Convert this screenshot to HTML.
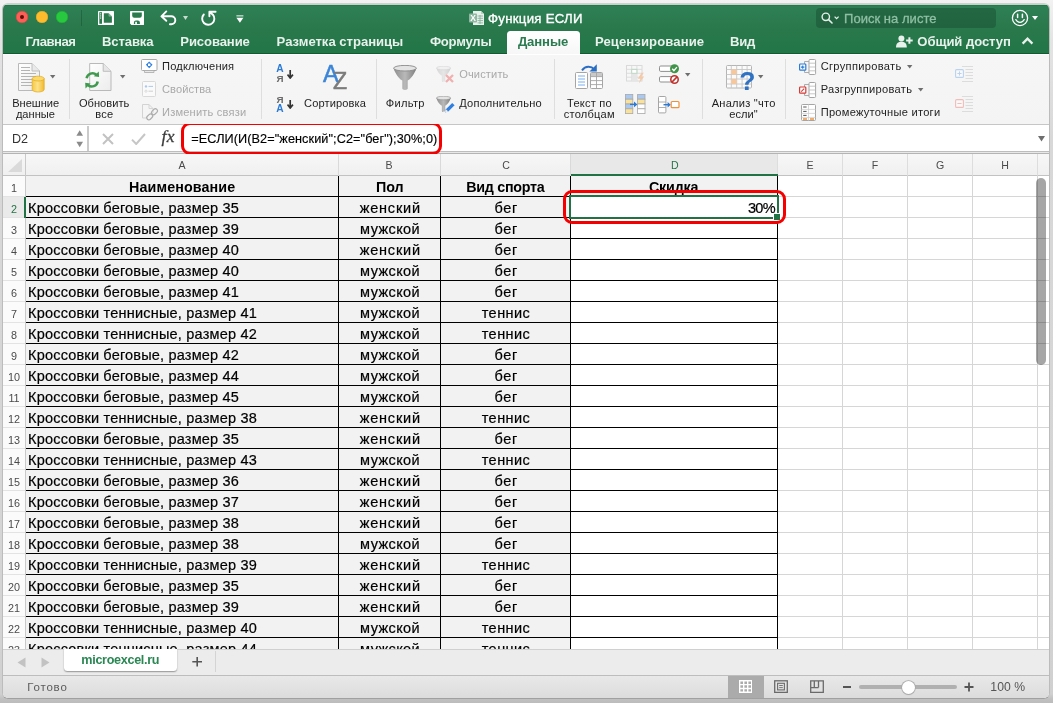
<!DOCTYPE html>
<html lang="ru"><head><meta charset="utf-8"><title>Функция ЕСЛИ</title>
<style>
html,body{margin:0;padding:0}
html{width:1053px;height:703px;overflow:hidden}
body{width:1053px;height:703px;overflow:hidden;position:relative;background:linear-gradient(to bottom,#f2f2f2 0,#e4e4e4 40px,#d8d8d8 140px,#d4d4d4 600px,#d0d0d0 694px,#c0c0c0 699px,#bcbcbc 703px);font-family:"Liberation Sans","DejaVu Sans",sans-serif}
.b{position:absolute;display:block}
.t{position:absolute;white-space:pre;display:block}
#shadow{position:absolute;left:2px;top:3px;width:1046px;height:694px;border-radius:6px;border:1px solid #bcbcbc;border-top-color:#d0d0d0;border-bottom-color:#a0a0a0;background:#fff}
#win{will-change:transform;overflow:hidden;position:absolute;left:0;top:0;width:1053px;height:703px;clip-path:inset(4px 4px 5px 3px round 5px);background:#fff}
</style></head><body>
<div id="shadow"></div>
<div id="win">
<div class="b" style="left:0px;top:0px;width:1053px;height:54px;background:linear-gradient(#2f7f55 8px,#29784b 30px,#237648 48px);"></div>
<div class="b" style="left:0px;top:4px;width:1053px;height:1px;background:#bfd5c8;"></div>
<div class="b" style="left:0px;top:5px;width:1053px;height:1px;background:#28774a;"></div>
<div class="b" style="left:0px;top:53px;width:1053px;height:1px;background:#0f5c2e;"></div>
<div class="b" style="left:16px;top:11px;width:12px;height:12px;background:#fc5f57;border-radius:50%;box-shadow:inset 0 0 0 .5px #df4239"></div>
<div class="b" style="left:36px;top:11px;width:12px;height:12px;background:#fdbc2e;border-radius:50%;box-shadow:inset 0 0 0 .5px #de9f22"></div>
<div class="b" style="left:56px;top:11px;width:12px;height:12px;background:#28c840;border-radius:50%;box-shadow:inset 0 0 0 .5px #1aab2b"></div>
<div class="b" style="left:20px;top:15px;width:4px;height:4px;background:#5c0d09;border-radius:50%"></div>
<div class="b" style="left:81px;top:10px;width:1px;height:16px;background:rgba(0,0,0,.18);"></div>
<svg class="b" style="left:98px;top:10.8px;" width="16" height="14.2" viewBox="0 0 16 14.2"><rect width="16" height="14.200" rx=".8" fill="#fff"/><rect x="1.300" y="1.200" width="2.700" height="11.600" fill="#2a7a4d"/><g fill="#fff"><rect x="2.100" y="2.300" width="1.100" height="1.100"/><rect x="2.100" y="4.400" width="1.100" height="1.100"/><rect x="2.100" y="6.500" width="1.100" height="1.100"/></g><path d="M5.800 2.200h5l3.100 3.100v6.500H5.800z" fill="#2a7a4d"/><path d="M10.800 2.200v3.100h3.100z" fill="#fff"/><path d="M11.400 3.100v1.600h1.600" fill="none" stroke="#2a7a4d" stroke-width=".7"/></svg>
<svg class="b" style="left:130px;top:10.8px;" width="14" height="14.2" viewBox="0 0 14 14.2"><path d="M0 .8a.8.800 0 0 1 .8-.8h12.400a.8.800 0 0 1 .8.800v12.600a.8.800 0 0 1-.8.800H1.600L0 12.600z" fill="#fff"/><path d="M2.200 1.500h9.600v3.300a2 2 0 0 1-2 2H4.200a2 2 0 0 1-2-2z" fill="#2a7a4d"/><path d="M3.900 13.100v-1.600a2 2 0 0 1 2-2h2a2 2 0 0 1 2 2v1.600z" fill="#2a7a4d"/><rect x="5.200" y="10.800" width="1.700" height="2.300" fill="#fff"/></svg>
<svg class="b" style="left:160px;top:10px;" width="17" height="16" viewBox="0 0 17 16"><path d="M6.300 1.400 1.400 6.300l4.900 4.500M1.700 6.300h9.600a4 4 0 0 1 0 8h-1.400" fill="none" stroke="#fff" stroke-width="1.900" stroke-linecap="round" stroke-linejoin="round"/></svg>
<svg class="b" style="left:183px;top:16px;" width="5" height="4" viewBox="0 0 5 4"><path d="M0 0h5L2.500 4z" fill="#c5dccf"/></svg>
<svg class="b" style="left:200px;top:10px;" width="17" height="16" viewBox="0 0 17 16"><path d="M3.800 4.500A6.100 6.100 0 1 0 12.900 4.700L9.500 1.800M9.400 6.300V1.700h6.200" fill="none" stroke="#fff" stroke-width="1.900" stroke-linecap="round" stroke-linejoin="round"/></svg>
<svg class="b" style="left:236px;top:15px;" width="8" height="8" viewBox="0 0 8 8"><rect x=".4" y="0" width="7" height="1.600" fill="#a9ccb8"/><path d="M.4 2.800h7L3.900 7.800z" fill="#fff"/></svg>
<svg class="b" style="left:469px;top:11px;" width="15" height="14" viewBox="0 0 15 14"><path d="M4 0h8l3 3v11H4z" fill="#e9f1ec"/><path d="M12 0v3h3" fill="#b8d2c3"/><g stroke="#7fae95" stroke-width=".8"><path d="M8.5 5h5.5M8.5 7.3h5.5M8.5 9.6h5.5M8.5 11.9h5.5M11 4v9"/></g><rect x="0" y="2.600" width="8" height="9" rx=".8" fill="#8fb7a1"/></svg>
<span class="t" style="top:8.35px;font-size:8.5px;line-height:20px;color:#fff;font-weight:700;left:273px;width:400px;text-align:center;">X</span>
<span class="t" style="top:8.63px;font-size:13.2px;line-height:20px;color:#fff;letter-spacing:0.28px;left:488px;-webkit-text-stroke:.35px #fff;">Функция ЕСЛИ</span>
<div class="b" style="left:816px;top:8px;width:180px;height:19.5px;background:rgba(20,70,42,.42);border-radius:4px"></div>
<svg class="b" style="left:821px;top:12px;" width="20" height="12" viewBox="0 0 20 12"><circle cx="4.8" cy="4.8" r="3.7" fill="none" stroke="#e6f0ea" stroke-width="1.4"/><path d="M7.6 7.6 11 11" stroke="#e6f0ea" stroke-width="1.6" stroke-linecap="round"/><path d="M13.6 4.6l2 2 2-2" fill="none" stroke="#e6f0ea" stroke-width="1.3"/></svg>
<span class="t" style="top:8.70px;font-size:13px;line-height:20px;color:#8fbfa4;letter-spacing:0.035px;left:844px;-webkit-text-stroke:.3px #8fbfa4;">Поиск на листе</span>
<svg class="b" style="left:1011px;top:9px;" width="18" height="18" viewBox="0 0 18 18"><circle cx="9" cy="9" r="7.6" fill="none" stroke="#fff" stroke-width="1.3"/><path d="M6.6 5.2v3.4M11.4 5.2v3.4" stroke="#fff" stroke-width="1.5" stroke-linecap="round"/><path d="M4.8 10.6a4.6 4.6 0 0 0 8.4 0" fill="none" stroke="#fff" stroke-width="1.3" stroke-linecap="round"/></svg>
<svg class="b" style="left:1032px;top:16px;" width="6" height="4" viewBox="0 0 6 4"><path d="M0 0h6L3 4z" fill="#fff"/></svg>
<div class="b" style="left:507px;top:31.4px;width:73px;height:23.6px;background:linear-gradient(#ffffff,#fbfbfb 50%,#f6f6f6);border-radius:3.500px 3.500px 0 0"></div>
<span class="t" style="top:32.46px;font-size:13.1px;line-height:20px;color:#e8f1ec;font-weight:700;letter-spacing:-0.494px;left:25.6px;">Главная</span>
<span class="t" style="top:32.46px;font-size:13.1px;line-height:20px;color:#e8f1ec;font-weight:700;letter-spacing:-0.105px;left:101.9px;">Вставка</span>
<span class="t" style="top:32.46px;font-size:13.1px;line-height:20px;color:#e8f1ec;font-weight:700;letter-spacing:-0.109px;left:180.3px;">Рисование</span>
<span class="t" style="top:32.46px;font-size:13.1px;line-height:20px;color:#e8f1ec;font-weight:700;letter-spacing:-0.021px;left:276.6px;">Разметка страницы</span>
<span class="t" style="top:32.46px;font-size:13.1px;line-height:20px;color:#e8f1ec;font-weight:700;letter-spacing:-0.237px;left:429.9px;">Формулы</span>
<span class="t" style="top:32.46px;font-size:13.1px;line-height:20px;color:#e8f1ec;font-weight:700;letter-spacing:0.101px;left:594.9px;">Рецензирование</span>
<span class="t" style="top:32.46px;font-size:13.1px;line-height:20px;color:#e8f1ec;font-weight:700;letter-spacing:-0.214px;left:729.9px;">Вид</span>
<span class="t" style="top:32.46px;font-size:13.1px;line-height:20px;color:#2a7b4f;font-weight:700;letter-spacing:-0.101px;left:517.9px;">Данные</span>
<span class="t" style="top:32.46px;font-size:13.1px;line-height:20px;color:#e8f1ec;font-weight:700;letter-spacing:-0.073px;left:917.3px;">Общий доступ</span>
<svg class="b" style="left:896px;top:35px;" width="17" height="13" viewBox="0 0 17 13"><circle cx="5.4" cy="3.4" r="3" fill="#e8f1ec"/><path d="M0 12.4c0-4 2.2-5.6 5.4-5.6s5.4 1.600 5.400 5.600z" fill="#e8f1ec"/><path d="M13.400 2.200v6.600M10.100 5.500h6.600" stroke="#e8f1ec" stroke-width="2"/></svg>
<svg class="b" style="left:1021px;top:36px;" width="13" height="9" viewBox="0 0 13 9"><path d="M1.600 7.600 6.500 2.600l4.900 5" fill="none" stroke="#e8f1ec" stroke-width="2.300"/></svg>
<div class="b" style="left:0px;top:125px;width:1053px;height:27px;background:#fff;"></div>
<div class="b" style="left:0px;top:124px;width:1053px;height:1px;background:#c6c6c6;"></div>
<div class="b" style="left:0px;top:151px;width:1053px;height:1px;background:#bdbdbd;"></div>
<div class="b" style="left:0px;top:152px;width:1053px;height:1px;background:#e8e8e8;"></div>
<div class="b" style="left:0px;top:153px;width:1053px;height:1px;background:#b4b4b4;"></div>
<div class="b" style="left:87px;top:126px;width:2px;height:25px;background:#cbcbcb;"></div>
<span class="t" style="top:129.43px;font-size:12.6px;line-height:20px;color:#333;letter-spacing:-0.109px;left:12px;">D2</span>
<svg class="b" style="left:76px;top:129px;" width="8" height="19" viewBox="0 0 8 19"><path d="M3.700 1.200 7 6.700H.4z" fill="#8a8a8a"/><path d="M3.700 18.200 7 12.700H.4z" fill="#8a8a8a"/></svg>
<svg class="b" style="left:102px;top:133px;" width="12" height="12" viewBox="0 0 12 12"><path d="M1 1l10 10M11 1 1 11" stroke="#c2c2c2" stroke-width="2"/></svg>
<svg class="b" style="left:131px;top:133px;" width="15" height="12" viewBox="0 0 15 12"><path d="M1 6.600 5.200 11 14 1" fill="none" stroke="#c6c6c6" stroke-width="2"/></svg>
<span class="t" style="top:126.14px;font-size:17.5px;line-height:20px;color:#3c3c3c;letter-spacing:0.6px;font-family:'Liberation Serif','DejaVu Serif',serif;left:161.4px;font-style:italic;-webkit-text-stroke:.3px #3c3c3c;">fx</span>
<span class="t" style="top:128.60px;font-size:12.7px;line-height:20px;color:#000;letter-spacing:0.08px;left:191.3px;-webkit-text-stroke:.15px #000;">=ЕСЛИ(И(B2="женский";C2="бег");30%;0)</span>
<svg class="b" style="left:1038px;top:136px;" width="7" height="6" viewBox="0 0 7 6"><path d="M0 0h7L3.500 5.500z" fill="#6e6e6e"/></svg>
<div class="b" style="left:180.9px;top:122px;width:261.1px;height:32.7px;background:transparent;box-sizing:border-box;border:3px solid #f40000;border-radius:9px"></div>
<div class="b" style="left:0px;top:54px;width:1053px;height:70px;background:linear-gradient(#f6f6f6,#f4f4f4);"></div>
<div class="b" style="left:0px;top:54px;width:1053px;height:1px;background:#fff;"></div>
<div class="b" style="left:69px;top:59px;width:1px;height:60px;background:#dedede;"></div>
<div class="b" style="left:261px;top:59px;width:1px;height:60px;background:#dedede;"></div>
<div class="b" style="left:376px;top:59px;width:1px;height:60px;background:#dedede;"></div>
<div class="b" style="left:554px;top:59px;width:1px;height:60px;background:#dedede;"></div>
<div class="b" style="left:702px;top:59px;width:1px;height:60px;background:#dedede;"></div>
<div class="b" style="left:785px;top:59px;width:1px;height:60px;background:#dedede;"></div>
<span class="t" style="top:92.85px;font-size:11.1px;line-height:20px;color:#1e1e1e;letter-spacing:-0.016px;left:-164.308px;width:400px;text-align:center;">Внешние</span>
<span class="t" style="top:104.45px;font-size:11.1px;line-height:20px;color:#1e1e1e;letter-spacing:-0.009px;left:-164.6045px;width:400px;text-align:center;">данные</span>
<span class="t" style="top:92.85px;font-size:11.1px;line-height:20px;color:#1e1e1e;letter-spacing:0.024px;left:-95.888px;width:400px;text-align:center;">Обновить</span>
<span class="t" style="top:104.45px;font-size:11.1px;line-height:20px;color:#1e1e1e;letter-spacing:0.25px;left:-95.675px;width:400px;text-align:center;">все</span>
<span class="t" style="top:55.95px;font-size:11.1px;line-height:20px;color:#1e1e1e;letter-spacing:0.191px;left:162px;">Подключения</span>
<span class="t" style="top:78.85px;font-size:11.1px;line-height:20px;color:#a9a9a9;letter-spacing:0.069px;left:162px;">Свойства</span>
<span class="t" style="top:101.85px;font-size:11.1px;line-height:20px;color:#a9a9a9;letter-spacing:0.182px;left:162px;">Изменить связи</span>
<span class="t" style="top:92.85px;font-size:11.1px;line-height:20px;color:#1e1e1e;letter-spacing:0.112px;left:135.05599999999998px;width:400px;text-align:center;">Сортировка</span>
<span class="t" style="top:92.85px;font-size:11.1px;line-height:20px;color:#1e1e1e;letter-spacing:0.284px;left:205.34199999999998px;width:400px;text-align:center;">Фильтр</span>
<span class="t" style="top:63.75px;font-size:11.1px;line-height:20px;color:#a9a9a9;letter-spacing:0.129px;left:459.2px;">Очистить</span>
<span class="t" style="top:92.85px;font-size:11.1px;line-height:20px;color:#1e1e1e;letter-spacing:0.22px;left:459.2px;">Дополнительно</span>
<span class="t" style="top:92.85px;font-size:11.1px;line-height:20px;color:#1e1e1e;letter-spacing:0.2px;left:389.5px;width:400px;text-align:center;">Текст по</span>
<span class="t" style="top:104.45px;font-size:11.1px;line-height:20px;color:#1e1e1e;letter-spacing:0.183px;left:389.29150000000004px;width:400px;text-align:center;">столбцам</span>
<span class="t" style="top:92.85px;font-size:11.1px;line-height:20px;color:#1e1e1e;letter-spacing:0.231px;left:543.6155px;width:400px;text-align:center;">Анализ "что</span>
<span class="t" style="top:104.45px;font-size:11.1px;line-height:20px;color:#1e1e1e;letter-spacing:0.043px;left:543.5215px;width:400px;text-align:center;">если"</span>
<span class="t" style="top:55.95px;font-size:11.1px;line-height:20px;color:#1e1e1e;letter-spacing:0.311px;left:820.7px;">Сгруппировать</span>
<span class="t" style="top:78.85px;font-size:11.1px;line-height:20px;color:#1e1e1e;letter-spacing:0.313px;left:820.7px;">Разгруппировать</span>
<span class="t" style="top:101.85px;font-size:11.1px;line-height:20px;color:#1e1e1e;letter-spacing:0.263px;left:820.7px;">Промежуточные итоги</span>
<svg class="b" style="left:17px;top:62px;" width="29" height="31" viewBox="0 0 29 31"><defs><linearGradient id="dg" x1="0" y1="0" x2="1" y2="1"><stop offset="0" stop-color="#fff"/><stop offset="1" stop-color="#ececec"/></linearGradient><linearGradient id="cy" x1="0" x2="1"><stop offset="0" stop-color="#f6c945"/><stop offset=".45" stop-color="#fde28a"/><stop offset="1" stop-color="#f1b92f"/></linearGradient></defs><path d="M1.500 1.500h13.500l7.500 7.500v19.500h-21z" fill="url(#dg)" stroke="#b9b9b9" stroke-width="1"/><path d="M15 1.500v7.500h7.500" fill="#e9e9e9" stroke="#b9b9b9" stroke-width=".9"/><path d="M4 5.500h9M4 8.500h9M4 11.500h15M4 14.500h15M4 17.500h11M4 20.500h11M4 23.500h11" stroke="#b4b4b4" stroke-width="1"/><path d="M15.200 16.600v10.800c0 1.500 2.700 2.600 6 2.600s6-1.100 6-2.600V16.600z" fill="url(#cy)" stroke="#e2a91c" stroke-width=".7"/><ellipse cx="21.200" cy="16.600" rx="6" ry="2.400" fill="#fbd96b" stroke="#e2a91c" stroke-width=".7"/></svg>
<svg class="b" style="left:50px;top:75px;" width="6" height="4" viewBox="0 0 6 4"><path d="M0 0h5.400L2.700 3.600z" fill="#6e6e6e"/></svg>
<svg class="b" style="left:84px;top:62px;" width="29" height="31" viewBox="0 0 29 31"><defs><linearGradient id="dg2" x1="0" y1="0" x2="1" y2="1"><stop offset="0" stop-color="#fff"/><stop offset="1" stop-color="#ececec"/></linearGradient></defs><path d="M5.700 1.500h13.500l7.800 7.800v19.200h-21.300z" fill="url(#dg2)" stroke="#b9b9b9" stroke-width="1"/><path d="M19.200 1.500v7.800h7.800" fill="#e6e6e6" stroke="#b9b9b9" stroke-width=".9"/><g fill="none" stroke="#3f9a4d" stroke-width="2.500"><path d="M2.600 16.300a5.900 5.900 0 0 1 9.800-3.500"/><path d="M13.700 19.500a5.900 5.900 0 0 1-9.800 3.500"/></g><path d="M9.800 14.300l5.300.700-.300-5.600z" fill="#3f9a4d"/><path d="M6.500 21.500l-5.300-.700.300 5.600z" fill="#3f9a4d"/></svg>
<svg class="b" style="left:120px;top:75px;" width="6" height="4" viewBox="0 0 6 4"><path d="M0 0h5.400L2.700 3.600z" fill="#6e6e6e"/></svg>
<svg class="b" style="left:141px;top:59px;" width="17" height="15" viewBox="0 0 17 15"><rect x=".5" y=".5" width="15.500" height="11" rx="1" fill="#fff" stroke="#a9a9a9"/><path d="M3.500 11.500h9.500v2h-9.500z" fill="#e8e8e8" stroke="#a9a9a9" stroke-width=".8"/><path d="M8.200 2.400l3.300 3.400-3.300 3.400-3.300-3.400z" fill="#2a7de1"/><rect x="7" y="4.600" width="2.400" height="2.400" fill="#fff"/></svg>
<svg class="b" style="left:142px;top:81px;" width="14" height="16" viewBox="0 0 14 16"><rect x=".5" y=".5" width="13" height="15" rx="1" fill="#fafafa" stroke="#d9d9d9"/><circle cx="4" cy="5.400" r="1.200" fill="#a9c8ef"/><path d="M6.500 5.400h4.500" stroke="#a9c8ef" stroke-width="1"/><circle cx="4" cy="10.200" r="1.100" fill="none" stroke="#cfcfcf" stroke-width=".7"/><path d="M6.500 10.200h4.500" stroke="#cfcfcf" stroke-width="1"/></svg>
<svg class="b" style="left:142px;top:104px;" width="17" height="17" viewBox="0 0 17 17"><path d="M.5.5h6.500l4 4v4.500M.5.500v13.500h3.500" fill="none" stroke="#d3d3d3" stroke-width="1"/><path d="M7 .5v4h4" fill="none" stroke="#d3d3d3" stroke-width=".9"/><g fill="none" stroke="#adadad" stroke-width="1.200"><rect x="9.200" y="5.600" width="6.600" height="4.200" rx="2.100" transform="rotate(-45 12.500 7.700)"/><rect x="4.400" y="10.800" width="6.600" height="4.200" rx="2.100" transform="rotate(-45 7.700 12.900)"/></g></svg>
<span class="t" style="top:59.47px;font-size:10.2px;line-height:20px;color:#2b7bd6;font-weight:700;left:80px;width:400px;text-align:center;">А</span>
<span class="t" style="top:68.60px;font-size:9.8px;line-height:20px;color:#6a6a6a;font-weight:700;left:80.10000000000002px;width:400px;text-align:center;">Я</span>
<span class="t" style="top:89.60px;font-size:9.8px;line-height:20px;color:#6a6a6a;font-weight:700;left:80.10000000000002px;width:400px;text-align:center;">Я</span>
<span class="t" style="top:98.87px;font-size:10.2px;line-height:20px;color:#2b7bd6;font-weight:700;left:80px;width:400px;text-align:center;">А</span>
<svg class="b" style="left:286.8px;top:70px;" width="7" height="9" viewBox="0 0 7 9"><path d="M3.200 0v6.600M.5 4.600l2.700 3.400 2.700-3.400" fill="none" stroke="#333" stroke-width="1.700"/></svg>
<svg class="b" style="left:286.8px;top:100.2px;" width="7" height="9" viewBox="0 0 7 9"><path d="M3.200 0v6.600M.5 4.600l2.700 3.400 2.700-3.400" fill="none" stroke="#333" stroke-width="1.700"/></svg>
<span class="t" style="top:64.19px;font-size:23.4px;line-height:20px;color:#3c85d8;left:130.89999999999998px;width:400px;text-align:center;-webkit-text-stroke:.5px #3c85d8;">A</span>
<span class="t" style="top:70.86px;font-size:23.2px;line-height:20px;color:#7b7b7b;left:140.2px;width:400px;text-align:center;-webkit-text-stroke:.5px #7b7b7b;">Z</span>
<svg class="b" style="left:392.8px;top:65px;" width="24" height="25" viewBox="0 0 24 25"><defs><linearGradient id="fg1" x1="0" x2="1"><stop offset="0" stop-color="#8e8e8e"/><stop offset=".5" stop-color="#b9b9b9"/><stop offset="1" stop-color="#7e7e7e"/></linearGradient></defs><path d="M.6 3.200c0 1.200 4 10.200 8.700 12.200v8.200c0 .9 1.200 1.400 2.700 1.400s2.700-.5 2.700-1.400v-8.200c4.700-2 8.700-11 8.700-12.200z" fill="url(#fg1)"/><ellipse cx="12" cy="3.200" rx="11.400" ry="2.800" fill="#e4e4e4" stroke="#8a8a8a" stroke-width=".9"/></svg>
<svg class="b" style="left:436px;top:66px;" width="18" height="17" viewBox="0 0 18 17"><defs><linearGradient id="fg2" x1="0" x2="1"><stop offset="0" stop-color="#d6d6d6"/><stop offset=".5" stop-color="#e6e6e6"/><stop offset="1" stop-color="#d0d0d0"/></linearGradient></defs><g transform="scale(.63)"><path d="M.6 3.200c0 1.200 4 10.200 8.700 12.200v8.200c0 .9 1.200 1.400 2.700 1.400s2.700-.5 2.700-1.400v-8.200c4.700-2 8.700-11 8.700-12.200z" fill="url(#fg2)"/><ellipse cx="12" cy="3.200" rx="11.400" ry="2.800" fill="#f1f1f1" stroke="#d2d2d2" stroke-width=".9"/></g><path d="M10 9l7 7M17 9l-7 7" stroke="#f0b0b0" stroke-width="2.300"/></svg>
<svg class="b" style="left:436px;top:96px;" width="19" height="17" viewBox="0 0 19 17"><defs><linearGradient id="fg3" x1="0" x2="1"><stop offset="0" stop-color="#8e8e8e"/><stop offset=".5" stop-color="#b9b9b9"/><stop offset="1" stop-color="#7e7e7e"/></linearGradient></defs><g transform="scale(.63)"><path d="M.6 3.200c0 1.200 4 10.200 8.700 12.200v8.200c0 .9 1.200 1.400 2.700 1.400s2.700-.5 2.700-1.400v-8.200c4.700-2 8.700-11 8.700-12.200z" fill="url(#fg3)"/><ellipse cx="12" cy="3.200" rx="11.400" ry="2.800" fill="#e4e4e4" stroke="#8a8a8a" stroke-width=".9"/></g><path d="M9 16.500l.9-3.300 6.300-6.300 2.400 2.400-6.300 6.300z" fill="#2f7fe0"/><path d="M9 16.500l.9-3.300 2.400 2.400z" fill="#f0f0f0"/></svg>
<svg class="b" style="left:575px;top:63px;" width="29" height="27" viewBox="0 0 29 27"><path d="M7 7.400c3.500-4.600 9-4.600 12.500-.8" fill="none" stroke="#2b6fc4" stroke-width="2"/><path d="M21.800 1.200v7.400h-7.400z" fill="#2b6fc4"/><rect x=".5" y="9.500" width="12" height="16" rx="1" fill="#fff" stroke="#a5a5a5"/><path d="M3 13h7M3 16h7M3 19h7M3 22h7" stroke="#78aef0" stroke-width="1"/><rect x="15.500" y="9.500" width="12" height="16" rx="1" fill="#fff" stroke="#a5a5a5"/><rect x="16" y="10" width="11" height="3.600" fill="#c9c9c9"/><path d="M21.500 10v15.500M16 13.600h11M16 17.600h11M16 21.600h11" stroke="#a5a5a5" stroke-width=".9"/></svg>
<svg class="b" style="left:626px;top:65px;" width="20" height="19" viewBox="0 0 20 19"><rect x=".5" y=".5" width="15.500" height="15.500" fill="#f7f7f7" stroke="#dadada"/><path d="M5.700.5v15.500M10.900.5v15.500M.5 4.400h15.500M.5 8.300h15.500M.5 12.200h15.500" stroke="#dadada" stroke-width=".9"/><rect x="5.700" y="8.300" width="5.200" height="7.700" fill="#e6e6e6"/><rect x="5.700" y="4.400" width="5.200" height="3.900" fill="#fff" stroke="#bcd9c4" stroke-width="1"/><path d="M15.600 7.800l-3.800 6h2.600l-1.600 4.800 5.400-7h-2.800l2.400-3.800z" fill="#f3c9a8"/></svg>
<svg class="b" style="left:625px;top:94px;" width="21" height="20" viewBox="0 0 21 20"><g stroke="#a9a9a9" stroke-width=".8"><rect x=".4" y=".4" width="7.400" height="4.800" fill="#a9c9f2"/><rect x=".4" y="5.200" width="7.400" height="4.800" fill="#fbe29a"/><rect x=".4" y="10" width="7.400" height="4.800" fill="#a9c9f2"/><rect x=".4" y="14.800" width="7.400" height="4.800" fill="#fbe29a"/><rect x="12.600" y=".4" width="7.400" height="4.800" fill="#a9c9f2"/><rect x="12.600" y="5.200" width="7.400" height="4.800" fill="#fbe29a"/><rect x="12.600" y="10" width="7.400" height="4.800" fill="#fff"/><rect x="12.600" y="14.800" width="7.400" height="4.800" fill="#fff"/></g><path d="M5 10.400h5" stroke="#2b7bd6" stroke-width="1.400"/><path d="M9 7.600l3.400 2.800L9 13.200z" fill="#2b7bd6"/></svg>
<svg class="b" style="left:659px;top:64px;" width="21" height="21" viewBox="0 0 21 21"><rect x=".5" y="2" width="14" height="5.400" rx="1.200" fill="#fff" stroke="#8f8f8f"/><rect x=".5" y="12.600" width="14" height="5.400" rx="1.200" fill="#fff" stroke="#8f8f8f"/><circle cx="15.500" cy="4.700" r="4.500" fill="#3f9447"/><path d="M13.200 4.800l1.700 1.800 3-3.500" fill="none" stroke="#fff" stroke-width="1.400"/><circle cx="15.500" cy="15.500" r="3.700" fill="#fff" stroke="#c0322e" stroke-width="1.600"/><path d="M12.900 18.100l5.200-5.200" stroke="#c0322e" stroke-width="1.500"/></svg>
<svg class="b" style="left:685px;top:72.5px;" width="6" height="4" viewBox="0 0 6 4"><path d="M0 0h5.400L2.700 3.600z" fill="#6e6e6e"/></svg>
<svg class="b" style="left:658px;top:96px;" width="22" height="18" viewBox="0 0 22 18"><rect x=".5" y=".5" width="7.400" height="16.400" rx="1" fill="#fff" stroke="#a5a5a5"/><path d="M.5 6h7.400M.5 11.500h7.400" stroke="#a5a5a5" stroke-width=".9"/><path d="M5.500 8.700h5" stroke="#2b7bd6" stroke-width="1.400"/><path d="M9.600 6l3.200 2.700-3.200 2.700z" fill="#2b7bd6"/><rect x="13.200" y="5.500" width="7.800" height="6.200" rx="1" fill="#fff" stroke="#f0913a" stroke-width="1.200"/></svg>
<svg class="b" style="left:726px;top:65px;" width="26" height="24" viewBox="0 0 26 24"><rect x=".5" y=".5" width="25" height="22.500" rx="1" fill="#fbfbfb" stroke="#b5b5b5"/><path d="M5.300.5v22.500M10.700.5v22.500M16.100.5v22.500M21.100.5v22.500M.5 4.500h25M.5 9.500h25M.5 14h25M.5 19h25" stroke="#c6c6c6" stroke-width=".9"/><rect x="5.300" y="4.500" width="5.400" height="5" fill="#f6c79d"/><rect x="5.300" y="14" width="5.400" height="5" fill="#f6c79d"/></svg>
<span class="t" style="top:71.22px;font-size:26.5px;line-height:20px;color:#2f72c4;font-weight:700;left:547.4px;width:400px;text-align:center;">?</span>
<svg class="b" style="left:758px;top:75px;" width="6" height="4" viewBox="0 0 6 4"><path d="M0 0h5.400L2.700 3.600z" fill="#6e6e6e"/></svg>
<svg class="b" style="left:799px;top:58.5px;" width="18" height="16" viewBox="0 0 18 16"><rect x="10" y=".5" width="6.600" height="15" rx="1" fill="#fff" stroke="#a5a5a5"/><path d="M10 4.200h6.600M10 8h6.600M10 11.800h6.600" stroke="#b9b9b9" stroke-width=".8"/><path d="M10 2.500H5.500v11H10" fill="none" stroke="#a5a5a5" stroke-width=".9"/><rect x=".6" y="5" width="6.200" height="6.200" rx=".8" fill="#fff" stroke="#2b7bd6" stroke-width="1.200"/><path d="M3.700 6.400v3.400M2 8.100h3.400" stroke="#2b7bd6" stroke-width="1.100"/></svg>
<svg class="b" style="left:799px;top:81.5px;" width="18" height="16" viewBox="0 0 18 16"><rect x="10" y=".5" width="6.600" height="15" rx="1" fill="#fff" stroke="#a5a5a5"/><path d="M10 4.200h6.600M10 8h6.600M10 11.800h6.600" stroke="#b9b9b9" stroke-width=".8"/><path d="M10 2.500H5.500v11H10" fill="none" stroke="#a5a5a5" stroke-width=".9"/><rect x=".6" y="5" width="6.200" height="6.200" rx=".8" fill="#fff" stroke="#d43a36" stroke-width="1.200"/><path d="M2.200 9.600l3-3" stroke="#d43a36" stroke-width="1.100"/></svg>
<svg class="b" style="left:907px;top:64.5px;" width="6" height="4" viewBox="0 0 6 4"><path d="M0 0h5.400L2.700 3.600z" fill="#6e6e6e"/></svg>
<svg class="b" style="left:918px;top:87.5px;" width="6" height="4" viewBox="0 0 6 4"><path d="M0 0h5.400L2.700 3.600z" fill="#6e6e6e"/></svg>
<svg class="b" style="left:801px;top:104px;" width="15" height="17" viewBox="0 0 15 17"><rect x=".5" y=".5" width="14" height="16" rx="1" fill="#fff" stroke="#a5a5a5"/><path d="M7.500.5v16M.5 5.400h14M.5 9.400h14M.5 13.400h14" stroke="#cfcfcf" stroke-width=".8"/><path d="M2.200 3h3.400M2.200 7.400h3.400M2.200 11.400h3.400" stroke="#555" stroke-width="1"/><path d="M2 15h4M9 15h4" stroke="#f0913a" stroke-width="1.600"/></svg>
<svg class="b" style="left:955px;top:66px;" width="19" height="16" viewBox="0 0 19 16"><path d="M7 .5h11M10.500 3.500h7.500M10.500 6.500h7.500M10.500 9.500h7.500M10.500 12.500h7.500M7 15.500h11" stroke="#dcdcdc" stroke-width="1"/><rect x=".6" y="3.600" width="7.800" height="7.800" rx="1" fill="#f9f9f9" stroke="#b9d2f0" stroke-width="1.100"/><path d="M4.500 5.400v4.200M2.400 7.500h4.200" stroke="#b9d2f0" stroke-width="1"/></svg>
<svg class="b" style="left:955px;top:96px;" width="19" height="16" viewBox="0 0 19 16"><path d="M7 .5h11M10.500 3.500h7.500M10.500 6.500h7.500M10.500 9.500h7.500M10.500 12.500h7.500M7 15.500h11" stroke="#dcdcdc" stroke-width="1"/><rect x=".6" y="3.600" width="7.800" height="7.800" rx="1" fill="#f9f9f9" stroke="#f0bdb9" stroke-width="1.100"/><path d="M2.400 7.500h4.200" stroke="#f0bdb9" stroke-width="1"/></svg>
<div class="b" style="left:0px;top:154px;width:1053px;height:495px;background:#fff;"></div>
<div class="b" style="left:0px;top:154px;width:1053px;height:21px;background:linear-gradient(#f7f7f7,#f0f0f0);"></div>
<div class="b" style="left:571px;top:154px;width:206px;height:21px;background:#e8e8e8;"></div>
<div class="b" style="left:0px;top:175px;width:1053px;height:1px;background:#c2c2c2;"></div>
<div class="b" style="left:0px;top:176px;width:25px;height:473px;background:#fbfbfb;"></div>
<div class="b" style="left:0px;top:197px;width:25px;height:21px;background:#eaeaea;"></div>
<div class="b" style="left:0px;top:196px;width:25px;height:1px;background:#e3e3e3;"></div>
<div class="b" style="left:26px;top:196px;width:1027px;height:1px;background:#d6d6d6;"></div>
<div class="b" style="left:0px;top:217px;width:25px;height:1px;background:#e3e3e3;"></div>
<div class="b" style="left:26px;top:217px;width:1027px;height:1px;background:#d6d6d6;"></div>
<div class="b" style="left:0px;top:238px;width:25px;height:1px;background:#e3e3e3;"></div>
<div class="b" style="left:26px;top:238px;width:1027px;height:1px;background:#d6d6d6;"></div>
<div class="b" style="left:0px;top:259px;width:25px;height:1px;background:#e3e3e3;"></div>
<div class="b" style="left:26px;top:259px;width:1027px;height:1px;background:#d6d6d6;"></div>
<div class="b" style="left:0px;top:280px;width:25px;height:1px;background:#e3e3e3;"></div>
<div class="b" style="left:26px;top:280px;width:1027px;height:1px;background:#d6d6d6;"></div>
<div class="b" style="left:0px;top:301px;width:25px;height:1px;background:#e3e3e3;"></div>
<div class="b" style="left:26px;top:301px;width:1027px;height:1px;background:#d6d6d6;"></div>
<div class="b" style="left:0px;top:322px;width:25px;height:1px;background:#e3e3e3;"></div>
<div class="b" style="left:26px;top:322px;width:1027px;height:1px;background:#d6d6d6;"></div>
<div class="b" style="left:0px;top:343px;width:25px;height:1px;background:#e3e3e3;"></div>
<div class="b" style="left:26px;top:343px;width:1027px;height:1px;background:#d6d6d6;"></div>
<div class="b" style="left:0px;top:364px;width:25px;height:1px;background:#e3e3e3;"></div>
<div class="b" style="left:26px;top:364px;width:1027px;height:1px;background:#d6d6d6;"></div>
<div class="b" style="left:0px;top:385px;width:25px;height:1px;background:#e3e3e3;"></div>
<div class="b" style="left:26px;top:385px;width:1027px;height:1px;background:#d6d6d6;"></div>
<div class="b" style="left:0px;top:406px;width:25px;height:1px;background:#e3e3e3;"></div>
<div class="b" style="left:26px;top:406px;width:1027px;height:1px;background:#d6d6d6;"></div>
<div class="b" style="left:0px;top:427px;width:25px;height:1px;background:#e3e3e3;"></div>
<div class="b" style="left:26px;top:427px;width:1027px;height:1px;background:#d6d6d6;"></div>
<div class="b" style="left:0px;top:448px;width:25px;height:1px;background:#e3e3e3;"></div>
<div class="b" style="left:26px;top:448px;width:1027px;height:1px;background:#d6d6d6;"></div>
<div class="b" style="left:0px;top:469px;width:25px;height:1px;background:#e3e3e3;"></div>
<div class="b" style="left:26px;top:469px;width:1027px;height:1px;background:#d6d6d6;"></div>
<div class="b" style="left:0px;top:490px;width:25px;height:1px;background:#e3e3e3;"></div>
<div class="b" style="left:26px;top:490px;width:1027px;height:1px;background:#d6d6d6;"></div>
<div class="b" style="left:0px;top:511px;width:25px;height:1px;background:#e3e3e3;"></div>
<div class="b" style="left:26px;top:511px;width:1027px;height:1px;background:#d6d6d6;"></div>
<div class="b" style="left:0px;top:532px;width:25px;height:1px;background:#e3e3e3;"></div>
<div class="b" style="left:26px;top:532px;width:1027px;height:1px;background:#d6d6d6;"></div>
<div class="b" style="left:0px;top:553px;width:25px;height:1px;background:#e3e3e3;"></div>
<div class="b" style="left:26px;top:553px;width:1027px;height:1px;background:#d6d6d6;"></div>
<div class="b" style="left:0px;top:574px;width:25px;height:1px;background:#e3e3e3;"></div>
<div class="b" style="left:26px;top:574px;width:1027px;height:1px;background:#d6d6d6;"></div>
<div class="b" style="left:0px;top:595px;width:25px;height:1px;background:#e3e3e3;"></div>
<div class="b" style="left:26px;top:595px;width:1027px;height:1px;background:#d6d6d6;"></div>
<div class="b" style="left:0px;top:616px;width:25px;height:1px;background:#e3e3e3;"></div>
<div class="b" style="left:26px;top:616px;width:1027px;height:1px;background:#d6d6d6;"></div>
<div class="b" style="left:0px;top:637px;width:25px;height:1px;background:#e3e3e3;"></div>
<div class="b" style="left:26px;top:637px;width:1027px;height:1px;background:#d6d6d6;"></div>
<div class="b" style="left:0px;top:658px;width:25px;height:1px;background:#e3e3e3;"></div>
<div class="b" style="left:26px;top:658px;width:1027px;height:1px;background:#d6d6d6;"></div>
<div class="b" style="left:777px;top:154px;width:1px;height:21px;background:#dddddd;"></div>
<div class="b" style="left:777px;top:175px;width:1px;height:474px;background:#d6d6d6;"></div>
<div class="b" style="left:842px;top:154px;width:1px;height:21px;background:#dddddd;"></div>
<div class="b" style="left:842px;top:175px;width:1px;height:474px;background:#d6d6d6;"></div>
<div class="b" style="left:907px;top:154px;width:1px;height:21px;background:#dddddd;"></div>
<div class="b" style="left:907px;top:175px;width:1px;height:474px;background:#d6d6d6;"></div>
<div class="b" style="left:972px;top:154px;width:1px;height:21px;background:#dddddd;"></div>
<div class="b" style="left:972px;top:175px;width:1px;height:474px;background:#d6d6d6;"></div>
<div class="b" style="left:1037px;top:154px;width:1px;height:21px;background:#dddddd;"></div>
<div class="b" style="left:1037px;top:175px;width:1px;height:474px;background:#d6d6d6;"></div>
<div class="b" style="left:25px;top:154px;width:1px;height:22px;background:#d9d9d9;"></div>
<div class="b" style="left:338px;top:154px;width:1px;height:22px;background:#d9d9d9;"></div>
<div class="b" style="left:440px;top:154px;width:1px;height:22px;background:#d9d9d9;"></div>
<div class="b" style="left:570px;top:154px;width:1px;height:22px;background:#d9d9d9;"></div>
<div class="b" style="left:26px;top:176px;width:751px;height:21px;background:#f2f2f2;"></div>
<div class="b" style="left:26px;top:197px;width:544px;height:452px;background:#f2f2f2;"></div>
<div class="b" style="left:26px;top:196px;width:752px;height:1px;background:#000;"></div>
<div class="b" style="left:26px;top:217px;width:752px;height:1px;background:#000;"></div>
<div class="b" style="left:26px;top:238px;width:752px;height:1px;background:#000;"></div>
<div class="b" style="left:26px;top:259px;width:752px;height:1px;background:#000;"></div>
<div class="b" style="left:26px;top:280px;width:752px;height:1px;background:#000;"></div>
<div class="b" style="left:26px;top:301px;width:752px;height:1px;background:#000;"></div>
<div class="b" style="left:26px;top:322px;width:752px;height:1px;background:#000;"></div>
<div class="b" style="left:26px;top:343px;width:752px;height:1px;background:#000;"></div>
<div class="b" style="left:26px;top:364px;width:752px;height:1px;background:#000;"></div>
<div class="b" style="left:26px;top:385px;width:752px;height:1px;background:#000;"></div>
<div class="b" style="left:26px;top:406px;width:752px;height:1px;background:#000;"></div>
<div class="b" style="left:26px;top:427px;width:752px;height:1px;background:#000;"></div>
<div class="b" style="left:26px;top:448px;width:752px;height:1px;background:#000;"></div>
<div class="b" style="left:26px;top:469px;width:752px;height:1px;background:#000;"></div>
<div class="b" style="left:26px;top:490px;width:752px;height:1px;background:#000;"></div>
<div class="b" style="left:26px;top:511px;width:752px;height:1px;background:#000;"></div>
<div class="b" style="left:26px;top:532px;width:752px;height:1px;background:#000;"></div>
<div class="b" style="left:26px;top:553px;width:752px;height:1px;background:#000;"></div>
<div class="b" style="left:26px;top:574px;width:752px;height:1px;background:#000;"></div>
<div class="b" style="left:26px;top:595px;width:752px;height:1px;background:#000;"></div>
<div class="b" style="left:26px;top:616px;width:752px;height:1px;background:#000;"></div>
<div class="b" style="left:26px;top:637px;width:752px;height:1px;background:#000;"></div>
<div class="b" style="left:26px;top:658px;width:752px;height:1px;background:#000;"></div>
<div class="b" style="left:25px;top:154px;width:1px;height:495px;background:#c9c9c9;"></div>
<div class="b" style="left:338px;top:176px;width:1px;height:473px;background:#000;"></div>
<div class="b" style="left:440px;top:176px;width:1px;height:473px;background:#000;"></div>
<div class="b" style="left:570px;top:176px;width:1px;height:473px;background:#000;"></div>
<div class="b" style="left:777px;top:176px;width:1px;height:473px;background:#000;"></div>
<svg class="b" style="left:7px;top:158px;" width="16" height="15" viewBox="0 0 16 15"><path d="M15 1v13H1z" fill="#dadada"/></svg>
<span class="t" style="top:155.13px;font-size:10.6px;line-height:20px;color:#4a4a4a;left:-18px;width:400px;text-align:center;">A</span>
<span class="t" style="top:155.13px;font-size:10.6px;line-height:20px;color:#4a4a4a;left:189px;width:400px;text-align:center;">B</span>
<span class="t" style="top:155.13px;font-size:10.6px;line-height:20px;color:#4a4a4a;left:306px;width:400px;text-align:center;">C</span>
<span class="t" style="top:155.13px;font-size:10.6px;line-height:20px;color:#4a4a4a;left:610px;width:400px;text-align:center;">E</span>
<span class="t" style="top:155.13px;font-size:10.6px;line-height:20px;color:#4a4a4a;left:675px;width:400px;text-align:center;">F</span>
<span class="t" style="top:155.13px;font-size:10.6px;line-height:20px;color:#4a4a4a;left:740px;width:400px;text-align:center;">G</span>
<span class="t" style="top:155.13px;font-size:10.6px;line-height:20px;color:#4a4a4a;left:805px;width:400px;text-align:center;">H</span>
<span class="t" style="top:155.13px;font-size:10.6px;line-height:20px;color:#217346;left:474.9px;width:400px;text-align:center;">D</span>
<div class="b" style="left:571px;top:174px;width:207px;height:2px;background:#217346;"></div>
<span class="t" style="top:177.86px;font-size:10.8px;line-height:20px;color:#4a4a4a;left:-186px;width:400px;text-align:center;">1</span>
<span class="t" style="top:176.75px;font-size:14.3px;line-height:20px;color:#000;font-weight:700;letter-spacing:0.101px;left:-17.849500000000006px;width:400px;text-align:center;">Наименование</span>
<span class="t" style="top:176.75px;font-size:14.3px;line-height:20px;color:#000;font-weight:700;letter-spacing:-0.175px;left:189.71250000000003px;width:400px;text-align:center;">Пол</span>
<span class="t" style="top:176.75px;font-size:14.3px;line-height:20px;color:#000;font-weight:700;letter-spacing:-0.287px;left:305.3565px;width:400px;text-align:center;">Вид спорта</span>
<span class="t" style="top:176.75px;font-size:14.3px;line-height:20px;color:#000;font-weight:700;letter-spacing:-0.171px;left:473.6145px;width:400px;text-align:center;">Скидка</span>
<span class="t" style="top:198.86px;font-size:10.8px;line-height:20px;color:#217346;left:-186px;width:400px;text-align:center;">2</span>
<span class="t" style="top:197.68px;font-size:14.5px;line-height:20px;color:#000;letter-spacing:0.18px;left:28.1px;-webkit-text-stroke:.2px #000;">Кроссовки беговые, размер 35</span>
<span class="t" style="top:197.68px;font-size:14.5px;line-height:20px;color:#000;letter-spacing:0.787px;left:190.2935px;width:400px;text-align:center;-webkit-text-stroke:.2px #000;">женский</span>
<span class="t" style="top:197.68px;font-size:14.5px;line-height:20px;color:#000;letter-spacing:0.65px;left:306.125px;width:400px;text-align:center;-webkit-text-stroke:.2px #000;">бег</span>
<span class="t" style="top:219.86px;font-size:10.8px;line-height:20px;color:#4a4a4a;left:-186px;width:400px;text-align:center;">3</span>
<span class="t" style="top:218.68px;font-size:14.5px;line-height:20px;color:#000;letter-spacing:0.18px;left:28.1px;-webkit-text-stroke:.2px #000;">Кроссовки беговые, размер 39</span>
<span class="t" style="top:218.68px;font-size:14.5px;line-height:20px;color:#000;letter-spacing:0.405px;left:190.10249999999996px;width:400px;text-align:center;-webkit-text-stroke:.2px #000;">мужской</span>
<span class="t" style="top:218.68px;font-size:14.5px;line-height:20px;color:#000;letter-spacing:0.65px;left:306.125px;width:400px;text-align:center;-webkit-text-stroke:.2px #000;">бег</span>
<span class="t" style="top:240.86px;font-size:10.8px;line-height:20px;color:#4a4a4a;left:-186px;width:400px;text-align:center;">4</span>
<span class="t" style="top:239.68px;font-size:14.5px;line-height:20px;color:#000;letter-spacing:0.18px;left:28.1px;-webkit-text-stroke:.2px #000;">Кроссовки беговые, размер 40</span>
<span class="t" style="top:239.68px;font-size:14.5px;line-height:20px;color:#000;letter-spacing:0.787px;left:190.2935px;width:400px;text-align:center;-webkit-text-stroke:.2px #000;">женский</span>
<span class="t" style="top:239.68px;font-size:14.5px;line-height:20px;color:#000;letter-spacing:0.65px;left:306.125px;width:400px;text-align:center;-webkit-text-stroke:.2px #000;">бег</span>
<span class="t" style="top:261.86px;font-size:10.8px;line-height:20px;color:#4a4a4a;left:-186px;width:400px;text-align:center;">5</span>
<span class="t" style="top:260.68px;font-size:14.5px;line-height:20px;color:#000;letter-spacing:0.18px;left:28.1px;-webkit-text-stroke:.2px #000;">Кроссовки беговые, размер 40</span>
<span class="t" style="top:260.68px;font-size:14.5px;line-height:20px;color:#000;letter-spacing:0.405px;left:190.10249999999996px;width:400px;text-align:center;-webkit-text-stroke:.2px #000;">мужской</span>
<span class="t" style="top:260.68px;font-size:14.5px;line-height:20px;color:#000;letter-spacing:0.65px;left:306.125px;width:400px;text-align:center;-webkit-text-stroke:.2px #000;">бег</span>
<span class="t" style="top:282.86px;font-size:10.8px;line-height:20px;color:#4a4a4a;left:-186px;width:400px;text-align:center;">6</span>
<span class="t" style="top:281.68px;font-size:14.5px;line-height:20px;color:#000;letter-spacing:0.18px;left:28.1px;-webkit-text-stroke:.2px #000;">Кроссовки беговые, размер 41</span>
<span class="t" style="top:281.68px;font-size:14.5px;line-height:20px;color:#000;letter-spacing:0.405px;left:190.10249999999996px;width:400px;text-align:center;-webkit-text-stroke:.2px #000;">мужской</span>
<span class="t" style="top:281.68px;font-size:14.5px;line-height:20px;color:#000;letter-spacing:0.65px;left:306.125px;width:400px;text-align:center;-webkit-text-stroke:.2px #000;">бег</span>
<span class="t" style="top:303.86px;font-size:10.8px;line-height:20px;color:#4a4a4a;left:-186px;width:400px;text-align:center;">7</span>
<span class="t" style="top:302.68px;font-size:14.5px;line-height:20px;color:#000;letter-spacing:0.203px;left:28.1px;-webkit-text-stroke:.2px #000;">Кроссовки теннисные, размер 41</span>
<span class="t" style="top:302.68px;font-size:14.5px;line-height:20px;color:#000;letter-spacing:0.405px;left:190.10249999999996px;width:400px;text-align:center;-webkit-text-stroke:.2px #000;">мужской</span>
<span class="t" style="top:302.68px;font-size:14.5px;line-height:20px;color:#000;letter-spacing:0.456px;left:306.028px;width:400px;text-align:center;-webkit-text-stroke:.2px #000;">теннис</span>
<span class="t" style="top:324.86px;font-size:10.8px;line-height:20px;color:#4a4a4a;left:-186px;width:400px;text-align:center;">8</span>
<span class="t" style="top:323.68px;font-size:14.5px;line-height:20px;color:#000;letter-spacing:0.203px;left:28.1px;-webkit-text-stroke:.2px #000;">Кроссовки теннисные, размер 42</span>
<span class="t" style="top:323.68px;font-size:14.5px;line-height:20px;color:#000;letter-spacing:0.405px;left:190.10249999999996px;width:400px;text-align:center;-webkit-text-stroke:.2px #000;">мужской</span>
<span class="t" style="top:323.68px;font-size:14.5px;line-height:20px;color:#000;letter-spacing:0.456px;left:306.028px;width:400px;text-align:center;-webkit-text-stroke:.2px #000;">теннис</span>
<span class="t" style="top:345.86px;font-size:10.8px;line-height:20px;color:#4a4a4a;left:-186px;width:400px;text-align:center;">9</span>
<span class="t" style="top:344.68px;font-size:14.5px;line-height:20px;color:#000;letter-spacing:0.18px;left:28.1px;-webkit-text-stroke:.2px #000;">Кроссовки беговые, размер 42</span>
<span class="t" style="top:344.68px;font-size:14.5px;line-height:20px;color:#000;letter-spacing:0.405px;left:190.10249999999996px;width:400px;text-align:center;-webkit-text-stroke:.2px #000;">мужской</span>
<span class="t" style="top:344.68px;font-size:14.5px;line-height:20px;color:#000;letter-spacing:0.65px;left:306.125px;width:400px;text-align:center;-webkit-text-stroke:.2px #000;">бег</span>
<span class="t" style="top:366.86px;font-size:10.8px;line-height:20px;color:#4a4a4a;left:-186px;width:400px;text-align:center;">10</span>
<span class="t" style="top:365.68px;font-size:14.5px;line-height:20px;color:#000;letter-spacing:0.18px;left:28.1px;-webkit-text-stroke:.2px #000;">Кроссовки беговые, размер 44</span>
<span class="t" style="top:365.68px;font-size:14.5px;line-height:20px;color:#000;letter-spacing:0.405px;left:190.10249999999996px;width:400px;text-align:center;-webkit-text-stroke:.2px #000;">мужской</span>
<span class="t" style="top:365.68px;font-size:14.5px;line-height:20px;color:#000;letter-spacing:0.65px;left:306.125px;width:400px;text-align:center;-webkit-text-stroke:.2px #000;">бег</span>
<span class="t" style="top:387.86px;font-size:10.8px;line-height:20px;color:#4a4a4a;left:-186px;width:400px;text-align:center;">11</span>
<span class="t" style="top:386.68px;font-size:14.5px;line-height:20px;color:#000;letter-spacing:0.18px;left:28.1px;-webkit-text-stroke:.2px #000;">Кроссовки беговые, размер 45</span>
<span class="t" style="top:386.68px;font-size:14.5px;line-height:20px;color:#000;letter-spacing:0.405px;left:190.10249999999996px;width:400px;text-align:center;-webkit-text-stroke:.2px #000;">мужской</span>
<span class="t" style="top:386.68px;font-size:14.5px;line-height:20px;color:#000;letter-spacing:0.65px;left:306.125px;width:400px;text-align:center;-webkit-text-stroke:.2px #000;">бег</span>
<span class="t" style="top:408.86px;font-size:10.8px;line-height:20px;color:#4a4a4a;left:-186px;width:400px;text-align:center;">12</span>
<span class="t" style="top:407.68px;font-size:14.5px;line-height:20px;color:#000;letter-spacing:0.203px;left:28.1px;-webkit-text-stroke:.2px #000;">Кроссовки теннисные, размер 38</span>
<span class="t" style="top:407.68px;font-size:14.5px;line-height:20px;color:#000;letter-spacing:0.787px;left:190.2935px;width:400px;text-align:center;-webkit-text-stroke:.2px #000;">женский</span>
<span class="t" style="top:407.68px;font-size:14.5px;line-height:20px;color:#000;letter-spacing:0.456px;left:306.028px;width:400px;text-align:center;-webkit-text-stroke:.2px #000;">теннис</span>
<span class="t" style="top:429.86px;font-size:10.8px;line-height:20px;color:#4a4a4a;left:-186px;width:400px;text-align:center;">13</span>
<span class="t" style="top:428.68px;font-size:14.5px;line-height:20px;color:#000;letter-spacing:0.18px;left:28.1px;-webkit-text-stroke:.2px #000;">Кроссовки беговые, размер 35</span>
<span class="t" style="top:428.68px;font-size:14.5px;line-height:20px;color:#000;letter-spacing:0.787px;left:190.2935px;width:400px;text-align:center;-webkit-text-stroke:.2px #000;">женский</span>
<span class="t" style="top:428.68px;font-size:14.5px;line-height:20px;color:#000;letter-spacing:0.65px;left:306.125px;width:400px;text-align:center;-webkit-text-stroke:.2px #000;">бег</span>
<span class="t" style="top:450.86px;font-size:10.8px;line-height:20px;color:#4a4a4a;left:-186px;width:400px;text-align:center;">14</span>
<span class="t" style="top:449.68px;font-size:14.5px;line-height:20px;color:#000;letter-spacing:0.203px;left:28.1px;-webkit-text-stroke:.2px #000;">Кроссовки теннисные, размер 43</span>
<span class="t" style="top:449.68px;font-size:14.5px;line-height:20px;color:#000;letter-spacing:0.405px;left:190.10249999999996px;width:400px;text-align:center;-webkit-text-stroke:.2px #000;">мужской</span>
<span class="t" style="top:449.68px;font-size:14.5px;line-height:20px;color:#000;letter-spacing:0.456px;left:306.028px;width:400px;text-align:center;-webkit-text-stroke:.2px #000;">теннис</span>
<span class="t" style="top:471.86px;font-size:10.8px;line-height:20px;color:#4a4a4a;left:-186px;width:400px;text-align:center;">15</span>
<span class="t" style="top:470.68px;font-size:14.5px;line-height:20px;color:#000;letter-spacing:0.18px;left:28.1px;-webkit-text-stroke:.2px #000;">Кроссовки беговые, размер 36</span>
<span class="t" style="top:470.68px;font-size:14.5px;line-height:20px;color:#000;letter-spacing:0.787px;left:190.2935px;width:400px;text-align:center;-webkit-text-stroke:.2px #000;">женский</span>
<span class="t" style="top:470.68px;font-size:14.5px;line-height:20px;color:#000;letter-spacing:0.65px;left:306.125px;width:400px;text-align:center;-webkit-text-stroke:.2px #000;">бег</span>
<span class="t" style="top:492.86px;font-size:10.8px;line-height:20px;color:#4a4a4a;left:-186px;width:400px;text-align:center;">16</span>
<span class="t" style="top:491.68px;font-size:14.5px;line-height:20px;color:#000;letter-spacing:0.18px;left:28.1px;-webkit-text-stroke:.2px #000;">Кроссовки беговые, размер 37</span>
<span class="t" style="top:491.68px;font-size:14.5px;line-height:20px;color:#000;letter-spacing:0.787px;left:190.2935px;width:400px;text-align:center;-webkit-text-stroke:.2px #000;">женский</span>
<span class="t" style="top:491.68px;font-size:14.5px;line-height:20px;color:#000;letter-spacing:0.65px;left:306.125px;width:400px;text-align:center;-webkit-text-stroke:.2px #000;">бег</span>
<span class="t" style="top:513.86px;font-size:10.8px;line-height:20px;color:#4a4a4a;left:-186px;width:400px;text-align:center;">17</span>
<span class="t" style="top:512.68px;font-size:14.5px;line-height:20px;color:#000;letter-spacing:0.18px;left:28.1px;-webkit-text-stroke:.2px #000;">Кроссовки беговые, размер 38</span>
<span class="t" style="top:512.68px;font-size:14.5px;line-height:20px;color:#000;letter-spacing:0.787px;left:190.2935px;width:400px;text-align:center;-webkit-text-stroke:.2px #000;">женский</span>
<span class="t" style="top:512.68px;font-size:14.5px;line-height:20px;color:#000;letter-spacing:0.65px;left:306.125px;width:400px;text-align:center;-webkit-text-stroke:.2px #000;">бег</span>
<span class="t" style="top:534.86px;font-size:10.8px;line-height:20px;color:#4a4a4a;left:-186px;width:400px;text-align:center;">18</span>
<span class="t" style="top:533.68px;font-size:14.5px;line-height:20px;color:#000;letter-spacing:0.18px;left:28.1px;-webkit-text-stroke:.2px #000;">Кроссовки беговые, размер 38</span>
<span class="t" style="top:533.68px;font-size:14.5px;line-height:20px;color:#000;letter-spacing:0.405px;left:190.10249999999996px;width:400px;text-align:center;-webkit-text-stroke:.2px #000;">мужской</span>
<span class="t" style="top:533.68px;font-size:14.5px;line-height:20px;color:#000;letter-spacing:0.65px;left:306.125px;width:400px;text-align:center;-webkit-text-stroke:.2px #000;">бег</span>
<span class="t" style="top:555.86px;font-size:10.8px;line-height:20px;color:#4a4a4a;left:-186px;width:400px;text-align:center;">19</span>
<span class="t" style="top:554.68px;font-size:14.5px;line-height:20px;color:#000;letter-spacing:0.203px;left:28.1px;-webkit-text-stroke:.2px #000;">Кроссовки теннисные, размер 39</span>
<span class="t" style="top:554.68px;font-size:14.5px;line-height:20px;color:#000;letter-spacing:0.787px;left:190.2935px;width:400px;text-align:center;-webkit-text-stroke:.2px #000;">женский</span>
<span class="t" style="top:554.68px;font-size:14.5px;line-height:20px;color:#000;letter-spacing:0.456px;left:306.028px;width:400px;text-align:center;-webkit-text-stroke:.2px #000;">теннис</span>
<span class="t" style="top:576.86px;font-size:10.8px;line-height:20px;color:#4a4a4a;left:-186px;width:400px;text-align:center;">20</span>
<span class="t" style="top:575.68px;font-size:14.5px;line-height:20px;color:#000;letter-spacing:0.18px;left:28.1px;-webkit-text-stroke:.2px #000;">Кроссовки беговые, размер 35</span>
<span class="t" style="top:575.68px;font-size:14.5px;line-height:20px;color:#000;letter-spacing:0.787px;left:190.2935px;width:400px;text-align:center;-webkit-text-stroke:.2px #000;">женский</span>
<span class="t" style="top:575.68px;font-size:14.5px;line-height:20px;color:#000;letter-spacing:0.65px;left:306.125px;width:400px;text-align:center;-webkit-text-stroke:.2px #000;">бег</span>
<span class="t" style="top:597.86px;font-size:10.8px;line-height:20px;color:#4a4a4a;left:-186px;width:400px;text-align:center;">21</span>
<span class="t" style="top:596.68px;font-size:14.5px;line-height:20px;color:#000;letter-spacing:0.18px;left:28.1px;-webkit-text-stroke:.2px #000;">Кроссовки беговые, размер 39</span>
<span class="t" style="top:596.68px;font-size:14.5px;line-height:20px;color:#000;letter-spacing:0.787px;left:190.2935px;width:400px;text-align:center;-webkit-text-stroke:.2px #000;">женский</span>
<span class="t" style="top:596.68px;font-size:14.5px;line-height:20px;color:#000;letter-spacing:0.65px;left:306.125px;width:400px;text-align:center;-webkit-text-stroke:.2px #000;">бег</span>
<span class="t" style="top:618.86px;font-size:10.8px;line-height:20px;color:#4a4a4a;left:-186px;width:400px;text-align:center;">22</span>
<span class="t" style="top:617.68px;font-size:14.5px;line-height:20px;color:#000;letter-spacing:0.203px;left:28.1px;-webkit-text-stroke:.2px #000;">Кроссовки теннисные, размер 40</span>
<span class="t" style="top:617.68px;font-size:14.5px;line-height:20px;color:#000;letter-spacing:0.405px;left:190.10249999999996px;width:400px;text-align:center;-webkit-text-stroke:.2px #000;">мужской</span>
<span class="t" style="top:617.68px;font-size:14.5px;line-height:20px;color:#000;letter-spacing:0.456px;left:306.028px;width:400px;text-align:center;-webkit-text-stroke:.2px #000;">теннис</span>
<span class="t" style="top:639.86px;font-size:10.8px;line-height:20px;color:#4a4a4a;left:-186px;width:400px;text-align:center;">23</span>
<span class="t" style="top:638.68px;font-size:14.5px;line-height:20px;color:#000;letter-spacing:0.203px;left:28.1px;-webkit-text-stroke:.2px #000;">Кроссовки теннисные, размер 44</span>
<span class="t" style="top:638.68px;font-size:14.5px;line-height:20px;color:#000;letter-spacing:0.405px;left:190.10249999999996px;width:400px;text-align:center;-webkit-text-stroke:.2px #000;">мужской</span>
<span class="t" style="top:638.68px;font-size:14.5px;line-height:20px;color:#000;letter-spacing:0.456px;left:306.028px;width:400px;text-align:center;-webkit-text-stroke:.2px #000;">теннис</span>
<div class="b" style="left:571px;top:197px;width:206px;height:20px;background:#fff;"></div>
<span class="t" style="top:197.68px;font-size:14.5px;line-height:20px;color:#000;letter-spacing:-0.616px;left:375.08400000000006px;width:400px;text-align:right;-webkit-text-stroke:.2px #000;">30%</span>
<div class="b" style="left:569px;top:195px;width:210px;height:2px;background:#217346;"></div>
<div class="b" style="left:569px;top:217px;width:206px;height:2px;background:#217346;"></div>
<div class="b" style="left:569px;top:195px;width:2px;height:24px;background:#217346;"></div>
<div class="b" style="left:777px;top:195px;width:2px;height:19px;background:#217346;"></div>
<div class="b" style="left:774px;top:214px;width:6px;height:6px;background:#217346;box-shadow:0 0 0 1px #fff"></div>
<div class="b" style="left:24px;top:197px;width:2px;height:21px;background:#217346;"></div>
<div class="b" style="left:563.1px;top:190.2px;width:222.6px;height:33.5px;background:transparent;box-sizing:border-box;border:3px solid #f40000;border-radius:9px"></div>
<div class="b" style="left:1036px;top:178px;width:10px;height:186.7px;background:rgba(0,0,0,.35);border-radius:5px"></div>
<div class="b" style="left:0px;top:649px;width:1053px;height:26px;background:#ececec;"></div>
<div class="b" style="left:0px;top:649px;width:1053px;height:1px;background:#d0d0d0;"></div>
<svg class="b" style="left:17px;top:657px;" width="9" height="11" viewBox="0 0 9 11"><path d="M8.500.5v10L.5 5.500z" fill="#c2c2c2"/></svg>
<svg class="b" style="left:41px;top:657px;" width="9" height="11" viewBox="0 0 9 11"><path d="M.5.5v10l8-5z" fill="#c2c2c2"/></svg>
<div class="b" style="left:63.7px;top:649px;width:113.4px;height:21.6px;background:#fff;border-radius:0 0 3.500px 3.500px;box-shadow:0 1px 1.500px rgba(0,0,0,.38)"></div>
<span class="t" style="top:650.33px;font-size:12.6px;line-height:20px;color:#2a8753;font-weight:700;letter-spacing:-0.309px;left:-79.7545px;width:400px;text-align:center;">microexcel.ru</span>
<svg class="b" style="left:192px;top:657px;" width="10.4" height="10" viewBox="0 0 10.4 10"><path d="M5.200 0v9.600M.3 4.800h9.800" stroke="#555" stroke-width="1.600"/></svg>
<div class="b" style="left:215px;top:651px;width:1px;height:21px;background:#d4d4d4;"></div>
<div class="b" style="left:0px;top:675px;width:1053px;height:28px;background:linear-gradient(#e9e9e9,#d9d9d9);"></div>
<div class="b" style="left:0px;top:675px;width:1053px;height:1px;background:#bdbdbd;"></div>
<span class="t" style="top:676.62px;font-size:11.5px;line-height:20px;color:#5c5c5c;letter-spacing:0.817px;left:27.2px;">Готово</span>
<div class="b" style="left:727.5px;top:676px;width:36.4px;height:22px;background:#ababab;"></div>
<svg class="b" style="left:739px;top:680px;" width="13.4" height="13" viewBox="0 0 13.4 13"><path d="M.7.7h12v11.600H.7zM4.700.7v11.600M8.700.7v11.600M.7 4.600h12M.7 8.500h12" fill="none" stroke="#fff" stroke-width="1.400"/></svg>
<svg class="b" style="left:774px;top:680px;" width="14" height="13" viewBox="0 0 14 13"><rect x=".7" y=".8" width="12.600" height="11.600" fill="none" stroke="#6a6a6a" stroke-width="1.300"/><rect x="3.600" y="3.300" width="6.800" height="6.600" fill="none" stroke="#6a6a6a" stroke-width="1.100"/><path d="M5.200 5.500h3.600M5.200 7.600h3.600" stroke="#6a6a6a" stroke-width=".9"/></svg>
<svg class="b" style="left:810px;top:680px;" width="14" height="13" viewBox="0 0 14 13"><path d="M.7.8h12.600v11.600H.7zM4.300.8v6.800M8.500.8v6.800M.7 7.600h7.800" fill="none" stroke="#6a6a6a" stroke-width="1.300"/></svg>
<div class="b" style="left:843px;top:686px;width:8px;height:2px;background:#555;"></div>
<div class="b" style="left:859px;top:685px;width:98px;height:4px;background:#b0b0b0;border-radius:2px"></div>
<div class="b" style="left:901.5px;top:680.5px;width:13px;height:13px;background:#fff;border-radius:50%;box-shadow:0 0 0 .8px #a9a9a9,0 1px 1px rgba(0,0,0,.2)"></div>
<svg class="b" style="left:964px;top:682px;" width="10" height="10" viewBox="0 0 10 10"><path d="M5 .5v9M.5 5h9" stroke="#555" stroke-width="1.800"/></svg>
<span class="t" style="top:677.27px;font-size:12.2px;line-height:20px;color:#555;letter-spacing:0.084px;left:990.3px;">100 %</span>
</div>
</body></html>
